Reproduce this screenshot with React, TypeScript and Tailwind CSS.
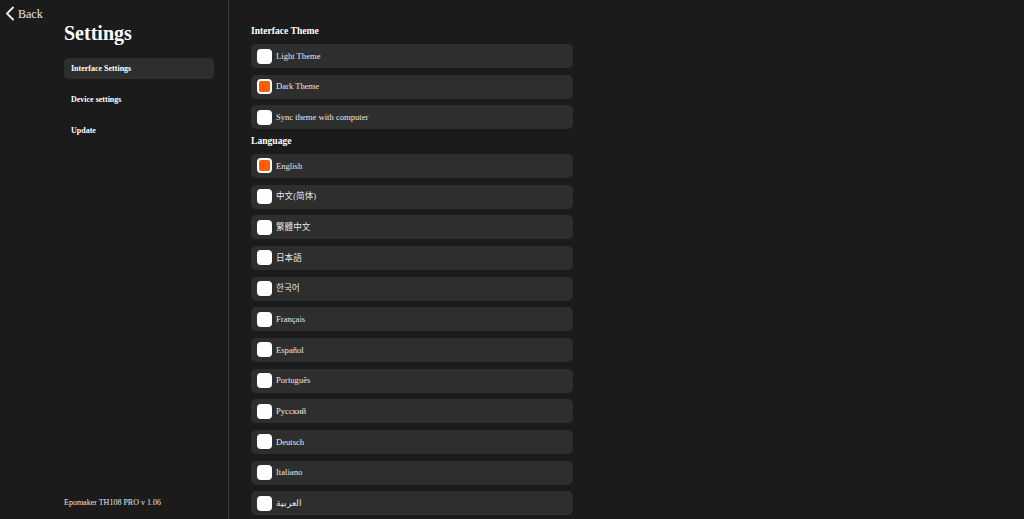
import React from "react";

const themes = [
  { label: "Light Theme", checked: false },
  { label: "Dark Theme", checked: true },
  { label: "Sync theme with computer", checked: false },
];

const languages = [
  { label: "English", checked: true },
  { label: "中文(简体)", checked: false },
  { label: "繁體中文", checked: false },
  { label: "日本語", checked: false },
  { label: "한국어", checked: false },
  { label: "Français", checked: false },
  { label: "Español", checked: false },
  { label: "Português", checked: false },
  { label: "Русский", checked: false },
  { label: "Deutsch", checked: false },
  { label: "Italiano", checked: false },
  { label: "العربية", checked: false },
];

function Row({ label, checked }: { label: string; checked: boolean }) {
  return (
    <div className="flex h-[24px] w-[322px] items-center rounded-[5px] bg-[#2e2e2e] pl-[6px]">
      {checked ? (
        <div className="h-[15px] w-[15px] rounded-[4px] border-[2px] border-white bg-[#ff5e00]" />
      ) : (
        <div className="h-[15px] w-[15px] rounded-[4px] bg-white" />
      )}
      <span className="ml-[4px] text-[8.6px] leading-none text-[#e6e6e6]">{label}</span>
    </div>
  );
}

export default function App() {
  return (
    <div className="flex h-[519px] w-[1024px] overflow-hidden bg-[#1b1b1b] font-['Liberation_Serif','Noto_Sans_CJK_SC',serif] text-white">
      <aside className="flex w-[229px] shrink-0 flex-col border-r border-[#363636]">
        <div className="flex h-[26px] items-center pl-[5px] pt-[1px]">
          <svg width="10" height="15" viewBox="0 0 10 15" fill="none">
            <polyline points="8,1.5 2,7.5 8,13.5" stroke="#e8e8e8" strokeWidth="2" strokeLinecap="round" strokeLinejoin="round" />
          </svg>
          <span className="ml-[3px] text-[12px] leading-none text-[#e8e8e8]">Back</span>
        </div>
        <div className="pl-[64px]">
          <h1 className="-mt-[3px] text-[20px] font-bold leading-none">Settings</h1>
          <nav className="mt-[15px] flex w-[150px] flex-col gap-[10px]">
            <div className="flex h-[21px] items-center rounded-[5px] bg-[#2e2e2e] px-[7px] text-[8px] font-bold leading-none">
              Interface Settings
            </div>
            <div className="flex h-[21px] items-center px-[7px] text-[8px] font-bold leading-none">
              Device settings
            </div>
            <div className="flex h-[21px] items-center px-[7px] text-[8px] font-bold leading-none">
              Update
            </div>
          </nav>
        </div>
        <div className="mt-auto pb-[12px] pl-[64px] text-[8px] leading-none text-[#e6e6e6]">
          Epomaker TH108 PRO v 1.06
        </div>
      </aside>
      <main className="flex flex-1 flex-col pl-[22px] pt-[24px]">
        <h2 className="mb-[6px] h-[14px] text-[9.6px] font-bold leading-[14px]">Interface Theme</h2>
        <div className="flex flex-col gap-[6.67px]">
          {themes.map((t) => (
            <Row key={t.label} {...t} />
          ))}
        </div>
        <h2 className="mb-[6px] mt-[4.67px] h-[14px] text-[9.6px] font-bold leading-[14px]">Language</h2>
        <div className="flex flex-col gap-[6.67px]">
          {languages.map((t) => (
            <Row key={t.label} {...t} />
          ))}
        </div>
      </main>
    </div>
  );
}
